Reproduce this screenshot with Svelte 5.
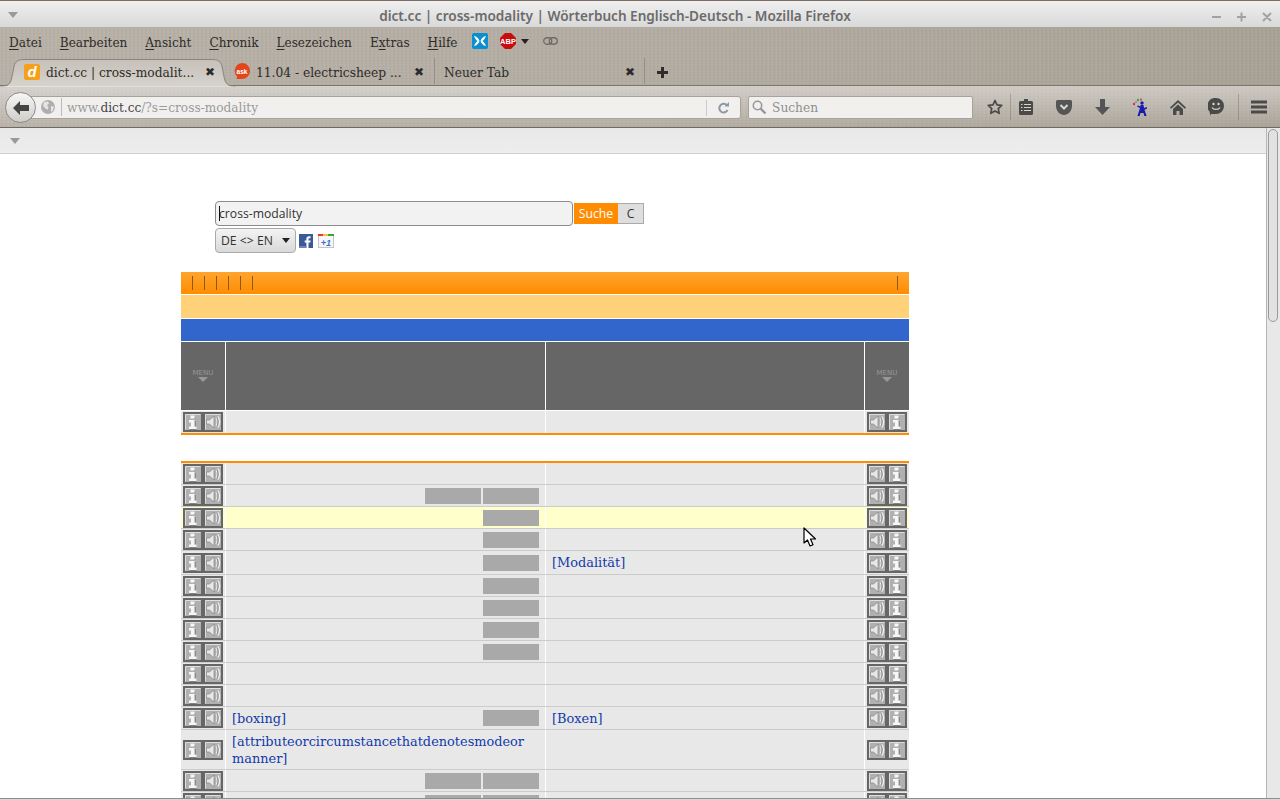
<script>
  const menu = [
    ['', 'D', 'atei'], ['', 'B', 'earbeiten'], ['', 'A', 'nsicht'], ['', 'C', 'hronik'],
    ['', 'L', 'esezeichen'], ['E', 'x', 'tras'], ['', 'H', 'ilfe']
  ];
  const rows = [
    { h: 22, blocks: 0 }, { h: 22, blocks: 2 }, { h: 22, blocks: 1, hi: true }, { h: 22, blocks: 1 },
    { h: 24, blocks: 1, de: '[Modalität]' }, { h: 22, blocks: 1 }, { h: 22, blocks: 1 }, { h: 22, blocks: 1 },
    { h: 22, blocks: 1 }, { h: 22, blocks: 0 }, { h: 22, blocks: 0 },
    { h: 23, blocks: 1, en: '[boxing]', de: '[Boxen]' },
    { h: 40, blocks: 0, en: '[attributeorcircumstancethatdenotesmodeor manner]' },
    { h: 22, blocks: 2 }, { h: 22, blocks: 2 }
  ];
</script>

{#snippet infoBtn()}
  <svg class="btn" width="20" height="20" viewBox="0 0 20 20">
    <rect x="1" y="1" width="18" height="18" fill="#b0b0b0" stroke="#666" stroke-width="2"/>
    <path d="M2.500 17.500v-15h15" fill="none" stroke="#dedede"/>
    <rect x="7.500" y="3.500" width="4" height="3" fill="#f6f6f6"/>
    <path d="M6 8h5.500v6.500h2V17H6v-2.500h2v-4H6z" fill="#f6f6f6"/>
    <path d="M11.500 6.500h.8M12.300 9v5.500M13.500 17.500H6.500" fill="none" stroke="#777" stroke-width="0.800"/>
  </svg>
{/snippet}

{#snippet speakerBtn()}
  <svg class="btn" width="20" height="20" viewBox="0 0 20 20">
    <rect x="1" y="1" width="18" height="18" fill="#b0b0b0" stroke="#666" stroke-width="2"/>
    <path d="M2.500 17.500v-15h15" fill="none" stroke="#dedede"/>
    <path d="M3.500 8h3l4.500-4v12l-4.500-4h-3z" fill="#e8e8e8" stroke="#7a7a7a" stroke-width="0.600"/>
    <path d="M13 6c1.400 2.400 1.400 5.600 0 8M15 4.500c2 3.400 2 7.600 0 11" fill="none" stroke="#f4f4f4" stroke-width="1.200"/>
    <path d="M14 6c1.200 2.400 1.200 5.600 0 8" fill="none" stroke="#777" stroke-width="0.700"/>
  </svg>
{/snippet}

{#snippet menuLabel()}
  <div class="menu-label"><span>MENU</span><i></i></div>
{/snippet}

<div class="window">
  <header class="titlebar">
    <i class="tri title-tri"></i>
    <div class="title">dict.cc | cross-modality | Wörterbuch Englisch-Deutsch - Mozilla Firefox</div>
    <div class="winctl">
      <svg width="64" height="12" viewBox="0 0 64 12"><path d="M1 6h9M26 6h9M30.500 1.500v9M52 2l8 8M60 2l-8 8" stroke="#a2a2a2" stroke-width="2" fill="none"/></svg>
    </div>
  </header>

  <div class="chrome">
    <nav class="menubar">
      {#each menu as m}
        <span class="mi">{m[0]}<u>{m[1]}</u>{m[2]}</span>
      {/each}
      <svg class="ext" width="16" height="16" viewBox="0 0 16 16">
        <rect width="16" height="16" rx="2" fill="#0b8fd0"/>
        <path d="M2 3c2.800.5 4.500 2.200 5.500 5-1 2.800-2.700 4.500-5.500 5 .8-2 2-3.600 3.300-5C4 6.600 2.800 5 2 3zM14 3c-.8 2-2 3.600-3.300 5 1.300 1.400 2.500 3 3.300 5-2.800-.5-4.500-2.200-5.500-5 1-2.800 2.700-4.500 5.500-5z" fill="#fff"/>
      </svg>
      <svg class="abp" width="16" height="16" viewBox="0 0 16 16">
        <path d="M5 0h6l5 5v6l-5 5H5l-5-5V5z" fill="#c70d0d"/>
        <text x="8" y="10.500" text-anchor="middle" class="abp-t">ABP</text>
      </svg>
      <i class="caret-dark"></i>
      <svg class="chain" width="15" height="8" viewBox="0 0 15 8">
        <rect x="0.750" y="0.750" width="8" height="6.500" rx="3.200" fill="none" stroke="#6f6b64" stroke-width="1.300"/>
        <rect x="6.250" y="0.750" width="8" height="6.500" rx="3.200" fill="none" stroke="#6f6b64" stroke-width="1.300"/>
      </svg>
    </nav>

    <div class="tabs">
      <div class="tab active">
        <svg class="tabshape" width="236" height="28" viewBox="0 0 236 28">
          <defs><linearGradient id="tg" x1="0" y1="0" x2="0" y2="1"><stop offset="0" stop-color="#c6c1b9"/><stop offset="1" stop-color="#d6d3cd"/></linearGradient></defs>
          <path d="M0 28c8 0 11-3 12-10l2-10C15 2.500 18 .5 24 .5h188c6 0 9 2 10 7l2 10c1 7 4 10 12 10z" fill="url(#tg)"/>
          <path d="M0 27.500c8 0 11-3 12-10l2-10C15 2.500 18 .5 24 .5h188c6 0 9 2 10 7l2 10c1 7 4 10 12 10" fill="none" stroke="#8a857c"/>
        </svg>
        <svg class="fav" width="16" height="16" viewBox="0 0 16 16">
          <rect width="16" height="16" rx="2" fill="#f6a01a"/>
          <text x="8" y="13" text-anchor="middle" class="fav-d">d</text>
        </svg>
        <span class="tabtext">dict.cc | cross-modalit...</span>
        <span class="x">✖</span>
      </div>
      <div class="tab second">
        <svg class="fav" width="16" height="17" viewBox="0 0 16 17">
          <path d="M8 0a8 8 0 0 1 0 16H2.500L3 13.500A8 8 0 0 1 8 0z" fill="#e2471b"/>
          <text x="8" y="10.500" text-anchor="middle" class="ask-t">ask</text>
        </svg>
        <span class="tabtext">11.04 - electricsheep ...</span>
        <span class="x">✖</span>
      </div>
      <div class="tab third">
        <span class="tabtext">Neuer Tab</span>
        <span class="x">✖</span>
      </div>
      <svg class="plus" width="11" height="11" viewBox="0 0 11 11"><path d="M4 0h3v4h4v3H7v4H4V7H0V4h4z" fill="#2f2d2a"/></svg>
    </div>

    <div class="toolbar">
      <div class="back">
        <svg width="18" height="16" viewBox="0 0 18 16"><path d="M8 1L1 8l7 7v-4h9V5H8z" fill="#444"/></svg>
      </div>
      <div class="url">
        <svg class="globe" width="14" height="14" viewBox="0 0 14 14">
          <circle cx="7" cy="7" r="7" fill="#aeaeae"/>
          <path d="M3 2l4-.5 1 2-2 2 1.500 1.500-1 3L4 8 2 6zM10 6l3 .5-1 4-2 1.500z" fill="#e4e4e4"/>
        </svg>
        <span class="urltext">www.<b>dict.cc</b>/?s=cross-modality</span>
        <svg class="reload" width="11" height="12" viewBox="0 0 11 12">
          <path d="M9 3.500A4.300 4.300 0 1 0 9.500 8" fill="none" stroke="#8d98a6" stroke-width="2"/>
          <path d="M6.500 4.500H11V0z" fill="#8d98a6"/>
        </svg>
      </div>
      <div class="search">
        <svg width="15" height="15" viewBox="0 0 15 15"><circle cx="5.500" cy="5.500" r="4.200" fill="none" stroke="#999" stroke-width="1.600"/><path d="M8.500 8.500l5 5" stroke="#999" stroke-width="2.400"/></svg>
        <span>Suchen</span>
      </div>
      <div class="tools">
        <svg class="t-star" width="16" height="16" viewBox="0 0 16 16"><path d="M8 1.500l2 4.300 4.700.6-3.400 3.200.9 4.700L8 12l-4.200 2.300.9-4.700L1.300 6.400 6 5.800z" fill="none" stroke="#4a4a48" stroke-width="1.700" stroke-linejoin="round"/></svg>
        <i class="vsep first"></i>
        <svg class="t-clip" width="14" height="16" viewBox="0 0 14 16"><path d="M5 0h4v2h3.500A1.500 1.500 0 0 1 14 3.500v11a1.500 1.500 0 0 1-1.500 1.500h-11A1.500 1.500 0 0 1 0 14.500v-11A1.500 1.500 0 0 1 1.500 2H5z" fill="#4a4a48"/><path d="M2 5.500h1.500M5 5.500h7M2 8.500h1.500M5 8.500h7M2 11.500h1.500M5 11.500h7" stroke="#d8d5cf" stroke-width="1.200"/></svg>
        <svg class="t-pocket" width="16" height="15" viewBox="0 0 16 15"><path d="M1.500 0h13A1.500 1.500 0 0 1 16 1.500V6c0 5-4 9-8 9s-8-4-8-9V1.500A1.500 1.500 0 0 1 1.500 0z" fill="#555"/><path d="M4.500 5L8 8.500 11.500 5" fill="none" stroke="#d8d5cf" stroke-width="2"/></svg>
        <svg class="t-down" width="15" height="16" viewBox="0 0 15 16"><path d="M5 0h5v8h5l-7.500 8L0 8h5z" fill="#555"/></svg>
        <svg class="t-fig" width="17" height="18" viewBox="0 0 17 18">
          <circle cx="2" cy="6" r="1.200" fill="#d33"/><circle cx="6" cy="2" r="1.200" fill="#3a3"/><circle cx="9" cy="1.500" r="1" fill="#d33"/><circle cx="4" cy="4" r="1" fill="#88a"/>
          <circle cx="10" cy="5" r="1.700" fill="#1a1ab0"/>
          <path d="M8.500 7h3l.5 3 3-1v1.500l-2.500 1.200 2 6.300h-2.200l-.8-3h-3l-.8 3H5.500l2.500-8-3-1.500 1-1 2.500 1z" fill="#1a1ab0"/>
        </svg>
        <svg class="t-home" width="16" height="15" viewBox="0 0 16 15"><path d="M8 0l8 7.500-1.200 1.200L8 2.500 1.200 8.700 0 7.500z" fill="#4a4a48"/><path d="M3 9l5-4.500L13 9v6H9.500v-4h-3v4H3z" fill="#4a4a48"/></svg>
        <svg class="t-smile" width="16" height="18" viewBox="0 0 16 18"><path d="M8 0a8 8 0 0 1 0 16H3l-.5 2L1.500 13.500A8 8 0 0 1 8 0z" fill="#4a4a48"/><circle cx="5.500" cy="6" r="1.200" fill="#d8d5cf"/><circle cx="10.500" cy="6" r="1.200" fill="#d8d5cf"/><path d="M4 9.500c1.500 2.500 6.500 2.500 8 0" fill="none" stroke="#d8d5cf" stroke-width="1.300"/></svg>
        <i class="vsep last"></i>
        <svg class="t-ham" width="16" height="14" viewBox="0 0 16 14"><path d="M0 2h16M0 7h16M0 12h16" stroke="#4a4a48" stroke-width="3"/></svg>
      </div>
    </div>
  </div>

  <div class="body">
    <div class="viewport">
      <div class="bookmarks"><i class="tri"></i></div>
      <main class="page">
        <div class="form">
          <div class="line1">
            <div class="inputwrap">
              <input class="q" value="cross-modality" aria-label="Suche" />
              <i class="textcaret"></i>
            </div>
            <button class="go">Suche</button>
            <button class="clear">C</button>
          </div>
          <div class="line2">
            <div class="select">DE &lt;&gt; EN<i class="caret-dark"></i></div>
            <svg class="fb" width="14" height="14" viewBox="0 0 14 14"><rect width="14" height="14" fill="#3b5998"/><path d="M9.500 14V8.500h1.800l.3-2H9.500V5.200c0-.6.200-1 1-1h1.100V2.400C11.300 2.400 10.800 2.300 10 2.300c-1.600 0-2.600 1-2.600 2.700v1.500H5.700v2h1.700V14z" fill="#fff"/><rect y="12" width="7.400" height="2" fill="#6d84b4"/></svg>
            <svg class="gp" width="16" height="14" viewBox="0 0 16 14">
              <rect x="0.500" y="0.500" width="15" height="13" fill="#f4f6fb" stroke="#c4c4c4"/>
              <path d="M0 0h5v2H0z" fill="#e33"/><path d="M5 0h5v2H5z" fill="#fb3"/><path d="M10 0h6v2h-6z" fill="#3a3"/>
              <text x="8" y="11.500" text-anchor="middle" class="gp-t">+1</text>
            </svg>
          </div>
        </div>

        <div class="table">
          <div class="bar orange">
            <div class="ticks"><i></i><i></i><i></i><i></i><i></i><i></i></div>
            <i class="tick-r"></i>
          </div>
          <div class="bar light"></div>
          <div class="bar blue"></div>
          <div class="cols head">
            <div>{@render menuLabel()}</div><div></div><div></div><div>{@render menuLabel()}</div>
          </div>
          <div class="cols row first-row" style="height:22px">
            <div class="c1">{@render infoBtn()}{@render speakerBtn()}</div><div></div><div></div>
            <div class="c4">{@render speakerBtn()}{@render infoBtn()}</div>
          </div>
          <div class="rule top"></div>
          <div class="spacer"></div>
          <div class="rule"></div>
          {#each rows as r}
            <div class="cols row" class:hi={r.hi} style="height:{r.h}px">
              <div class="c1">{@render infoBtn()}{@render speakerBtn()}</div>
              <div class="c2">
                {#if r.en}<a href="#a" class="term" class:wide={r.h > 30}>{r.en}</a>{/if}
                {#if r.blocks}
                  <div class="blocks">{#each Array(r.blocks) as _}<b></b>{/each}</div>
                {/if}
              </div>
              <div class="c3">{#if r.de}<a href="#a" class="term">{r.de}</a>{/if}</div>
              <div class="c4">{@render speakerBtn()}{@render infoBtn()}</div>
            </div>
          {/each}
        </div>
      </main>
      <svg class="cursor" width="14" height="21" viewBox="0 0 14 21"><path d="M1 1v15l3.500-3 2.500 6 3-1.300-2.500-5.700H12.500z" fill="#fff" stroke="#000" stroke-width="1.200" stroke-linejoin="round"/></svg>
    </div>
    <div class="scrollbar"><div class="thumb"></div></div>
  </div>
  <div class="bottom"></div>
</div>

<style>
  :global(body) { margin: 0; overflow: hidden; background: #fff; }
  i { display: block; font-style: normal; }
  .window { width: 1280px; height: 800px; display: flex; flex-direction: column; overflow: hidden; font-family: "DejaVu Serif Condensed", "DejaVu Serif", serif; font-stretch: condensed; }

  .titlebar { height: 26px; flex: none; border-top: 1px solid #7d6c62; background: linear-gradient(#efefef, #d9d9d9); display: flex; align-items: center; justify-content: center; position: relative; padding-right: 50px; }
  .title { font: 600 13.6px "Noto Sans", sans-serif; color: #6b6b6b; margin-top: 3px; }
  .tri { width: 0; height: 0; border-left: 5px solid transparent; border-right: 5px solid transparent; border-top: 6px solid #999; }
  .title-tri { position: absolute; left: 8px; top: 11px; }
  .winctl { position: absolute; left: 1211px; top: 10px; line-height: 0; }

  .chrome {
    flex: none;
    background:
      repeating-linear-gradient(90deg, rgba(255,255,255,.025) 0 1px, rgba(0,0,0,.018) 1px 3px, transparent 3px 4px),
      repeating-linear-gradient(0deg, rgba(0,0,0,.018) 0 1px, transparent 1px 3px),
      linear-gradient(90deg, #bab3aa, #b5aea4 50%, #aaa398);
    border-bottom: 1px solid #6f6b63;
  }
  .menubar { height: 30px; display: flex; align-items: center; padding-left: 9px; font-size: 13.450px; color: #2d2b28; }
  .mi { margin-right: 18px; white-space: nowrap; }
  .menubar u { text-underline-offset: 2px; }
  .ext { margin-left: -4px; margin-top: -2px; }
  .abp { margin-left: 12px; margin-top: -2px; }
  .abp-t { font: bold 7.500px "Liberation Sans", sans-serif; fill: #fff; }
  .caret-dark { width: 0; height: 0; border-left: 4.500px solid transparent; border-right: 4.500px solid transparent; border-top: 5px solid #222; }
  .menubar .caret-dark { margin-left: 5px; margin-top: -2px; }
  .chain { margin-left: 14px; margin-top: -2px; }

  .tabs { height: 29px; display: flex; align-items: center; font-size: 13.600px; color: #2d2b28; border-bottom: 1px solid #7c776e; box-sizing: border-box; }
  .tab { height: 28px; box-sizing: border-box; display: flex; align-items: center; position: relative; }
  .tab.active { width: 229px; margin-left: 0; padding-left: 24px; }
  .tabshape { position: absolute !important; left: 0; top: 2px; width: 236px; height: 28px; }
  .tab > :not(.tabshape) { position: relative; }
  .fav { flex: none; margin-top: 1px; }
  .fav-d { font: italic bold 15px "Liberation Sans", sans-serif; fill: #fff; }
  .ask-t { font: bold 6.500px "Liberation Sans", sans-serif; fill: #fff; }
  .gp-t { font: italic bold 9px "Liberation Sans", sans-serif; fill: #3b6fc4; }
  .tabtext { margin-left: 6px; margin-top: 2px; white-space: nowrap; }
  .x { position: absolute !important; font: 12px "DejaVu Sans", sans-serif; color: #2b2b2b; top: 8px; }
  .active .x { left: 205px; }
  .tab.second { width: 206px; padding-left: 5px; border-right: 1px solid #958f85; height: 26px; }
  .second .x { left: 185px; top: 7px; }
  .tab.third { width: 210px; padding-left: 3px; border-right: 1px solid #958f85; height: 26px; }
  .third .x { left: 190px; top: 7px; }
  .plus { margin-left: 12px; margin-top: 2px; }

  .toolbar { height: 41px; box-sizing: border-box; padding-top: 1px; display: flex; align-items: center; position: relative; background: linear-gradient(rgba(255,255,255,.42), rgba(255,255,255,.02)); }
  .back { position: absolute; left: 5px; top: 6px; width: 31px; height: 31px; box-sizing: border-box; border-radius: 50%; border: 1px solid #8d8a84; background: linear-gradient(#f7f7f7, #cfcdc8); display: flex; align-items: center; justify-content: center; z-index: 1; }
  .url { margin-left: 27px; width: 714px; height: 23px; box-sizing: border-box; border: 1px solid #a7a398; border-radius: 0 3px 3px 0; background: #f1f0ee; display: flex; align-items: center; padding-left: 13px; position: relative; }
  .urltext { padding-left: 5px; border-left: 1px solid #bbb; font-size: 13.500px; line-height: 18px; color: #9a9a9a; margin-left: 6px; }
  .urltext b { font-weight: normal; color: #444; }
  .reload { position: absolute; right: 11px; top: 5px; }
  .url::after { content: ""; position: absolute; right: 33px; top: 3px; width: 1px; height: 16px; background: #ccc; }
  .search { margin-left: 7px; width: 225px; height: 23px; box-sizing: border-box; border: 1px solid #a7a398; border-radius: 2px; background: #f1f0ee; display: flex; align-items: center; padding-left: 3px; gap: 5px; font-size: 13.600px; color: #8f8f8f; }
  .tools { position: relative; margin-left: 14px; display: flex; align-items: center; }
  .t-star { margin-left: 0; }
  .vsep { width: 1px; height: 26px; background: rgba(90,85,78,.3); }
  .vsep.first { margin-left: 7px; }
  .t-clip { margin-left: 8px; }
  .t-pocket { margin-left: 23px; }
  .t-down { margin-left: 23px; }
  .t-fig { margin-left: 22px; }
  .t-home { margin-left: 21px; }
  .t-smile { margin-left: 22px; }
  .vsep.last { margin-left: 14px; }
  .t-ham { margin-left: 12px; }

  .body { flex: 1; min-height: 0; display: flex; }
  .viewport { flex: 1; min-width: 0; display: flex; flex-direction: column; position: relative; overflow: hidden; }
  .bookmarks { height: 25px; flex: none; background: linear-gradient(#e8e8e8, #ededed); border-bottom: 1px solid #cfcfcf; display: flex; align-items: center; padding-left: 10px; }
  .page { flex: 1; min-height: 0; overflow: hidden; background: #fff; padding-top: 47px; }

  .form { margin-left: 215px; margin-bottom: 19px; font-family: "Open Sans", sans-serif; font-stretch: normal; font-size: 12.200px; color: #333; }
  .line1 { display: flex; align-items: center; height: 25px; }
  .inputwrap { position: relative; line-height: 0; }
  .q { width: 358px; height: 25px; box-sizing: border-box; border: 1px solid #8c8c8c; border-radius: 4px; background: #f2f2f2; padding: 0 3px; font: inherit; color: #333; outline: none; }
  .textcaret { position: absolute; left: 4px; top: 5px; width: 1px; height: 15px; background: #111; }
  .go, .clear { height: 21px; border: 0; padding: 0; font: inherit; }
  .go { width: 44px; margin-left: 1px; background: #ff8c00; color: #fff; }
  .clear { width: 26px; background: #dedede; border: 1px solid #aaa; border-width: 1px 1px 1px 0; box-sizing: border-box; color: #333; }
  .line2 { display: flex; align-items: center; margin-top: 2px; height: 25px; }
  .select { width: 81px; height: 25px; box-sizing: border-box; border: 1px solid #aaa; border-radius: 4px; background: linear-gradient(#f4f4f4, #d9d9d9); display: flex; align-items: center; justify-content: space-between; padding: 0 5px; }
  .fb { margin-left: 3px; }
  .gp { margin-left: 5px; }

  .table { width: 728px; margin-left: 181px; font-stretch: normal; }
  .bar { height: 22px; border-bottom: 1px solid #fff; }
  .orange { background: linear-gradient(#ffa52f, #ff8c00); display: flex; justify-content: space-between; align-items: center; padding: 0 11px; }
  .ticks { display: flex; gap: 11px; }
  .ticks i, .tick-r { width: 1px; height: 14px; background: #8a5a12; }
  .bar.light { background: #ffd27a; height: 23px; }
  .blue { background: #3366cc; }
  .cols { display: grid; grid-template-columns: 44px 320px 319px 45px; }
  .cols > div + div { border-left: 1px solid #fff; box-sizing: border-box; }
  .head { height: 69px; box-sizing: border-box; background: #666; border-bottom: 1px solid #fff; }
  .head > div { display: flex; align-items: center; justify-content: center; }
  .menu-label { display: flex; flex-direction: column; align-items: center; color: #989898; font: 7px/7px "DejaVu Sans", sans-serif; }
  .menu-label i { width: 0; height: 0; border-left: 5px solid transparent; border-right: 5px solid transparent; border-top: 5px solid #989898; }
  .row { box-sizing: border-box; background: #e8e8e8; border-bottom: 1px solid #ccc; }
  .row.hi { background: #ffffcc; }
  .first-row { border-bottom: 0; }
  .c1, .c4 { display: flex; align-items: center; padding-left: 2px; }
  .btn { flex: none; display: block; }
  .c2 { position: relative; display: flex; align-items: center; justify-content: space-between; padding: 0 6px; }
  .c3 { display: flex; align-items: center; padding: 0 6px; }
  .term { font: 12.900px/17px "DejaVu Serif", serif; color: #123aa8; text-decoration: none; }
  .term.wide { width: 300px; }
  .blocks { display: flex; gap: 2px; margin-left: auto; }
  .blocks b { display: block; width: 56px; height: 16px; background: #a9a9a9; }
  .rule { height: 2px; background: #ff8c00; }
  .rule.top { margin-top: 0; }
  .spacer { height: 26px; }

  .cursor { position: absolute; left: 803px; top: 399px; }
  .scrollbar { width: 14px; flex: none; box-sizing: border-box; background: #e8e8e8; border-left: 1px solid #b5b5b5; padding: 1px 2px 0 1px; }
  .thumb { height: 193px; box-sizing: border-box; border: 1px solid #9a9a9a; border-radius: 5px; background: #e2e2e2; }
  .bottom { height: 2px; flex: none; background: #8d8d8d; border-bottom: 1px solid #d8d8d8; box-sizing: border-box; }
</style>
